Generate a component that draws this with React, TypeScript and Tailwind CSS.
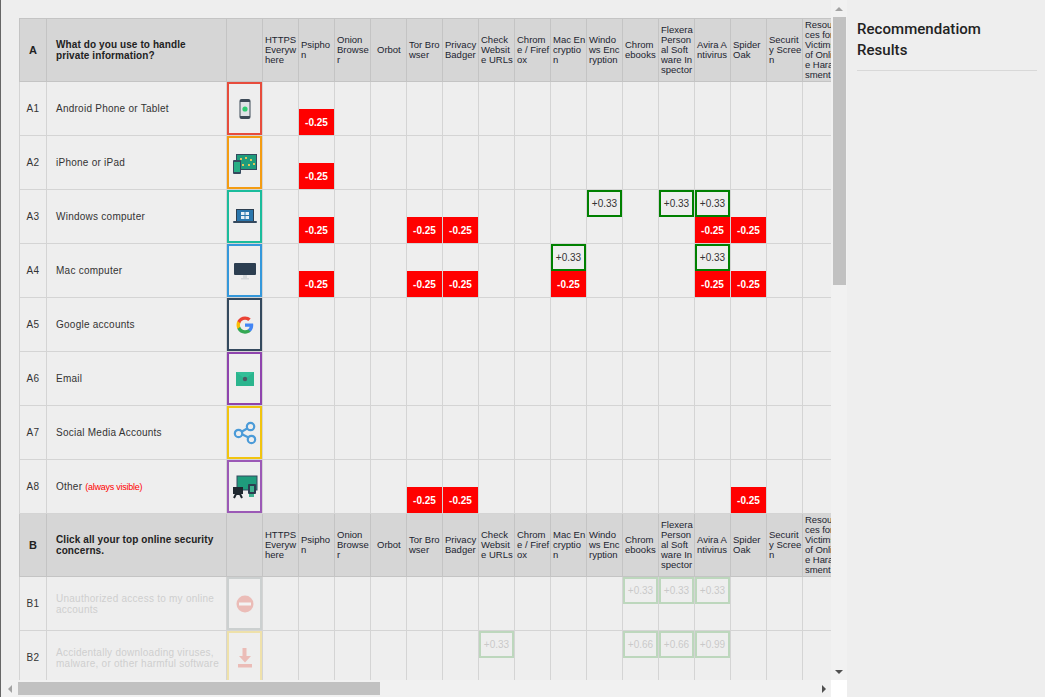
import type { ReactNode } from "react"

const TOOLS = [
  "HTTPS Everywhere",
  "Psiphon",
  "Onion Browser",
  "Orbot",
  "Tor Browser",
  "Privacy Badger",
  "Check Website URLs",
  "Chrome / Firefox",
  "Mac Encryption",
  "Windows Encryption",
  "Chromebooks",
  "Flexera Personal Software Inspector",
  "Avira Antivirus",
  "Spider Oak",
  "Security Screen",
  "Resources for Victims of Online Harassment",
]

const PhoneIcon = (
  <svg width="26" height="26" viewBox="0 0 26 26">
    <rect x="7.500" y="3" width="11" height="20" rx="2" fill="#3d4a57" />
    <rect x="8.500" y="6" width="9" height="14" fill="#dfe3e6" />
    <circle cx="13" cy="13" r="2.600" fill="#2ecc71" />
  </svg>
)

const TabletIcon = (
  <svg width="26" height="26" viewBox="0 0 26 26">
    <rect x="4" y="4" width="21" height="16" fill="#34495e" />
    <rect x="5" y="5" width="19" height="14" fill="#1f9c7c" />
    <path d="M8 8h2v2H8zM13 7h2v2h-2zM18 9h2v2h-2zM10 14h2v2h-2zM16 14h2v2h-2zM21 13h2v2h-2z" fill="#e2c65a" />
    <rect x="1" y="10" width="8" height="14" rx="1" fill="#34495e" />
    <rect x="2" y="12" width="6" height="10" fill="#27ae85" />
  </svg>
)

const LaptopIcon = (
  <svg width="26" height="26" viewBox="0 0 26 26">
    <path d="M4 5h18v12H4z" fill="#2c3e50" />
    <rect x="5" y="6" width="16" height="11" fill="#2a76ad" />
    <rect x="9" y="8" width="8" height="7" fill="#e8f0f6" />
    <path d="M13 8v7M9 11.500h8" stroke="#2a76ad" />
    <rect x="1" y="17" width="24" height="2" rx="1" fill="#34495e" />
  </svg>
)

const MonitorIcon = (
  <svg width="26" height="26" viewBox="0 0 26 26">
    <rect x="2" y="5" width="22" height="12" rx="1" fill="#2c3e50" />
    <rect x="11" y="17" width="4" height="3" fill="#d5d8da" />
    <rect x="9" y="20" width="8" height="1.500" fill="#d5d8da" />
  </svg>
)

const GoogleIcon = (
  <svg width="18" height="18" viewBox="0 0 48 48">
    <path fill="#4285f4" d="M46 24.500c0-1.600-.1-3-.4-4.500H24v8.600h12.400c-.5 2.800-2.100 5.200-4.500 6.800v5.600h7.300C43.500 36.900 46 31.200 46 24.500z" />
    <path fill="#34a853" d="M24 47c6.100 0 11.300-2 15.100-5.500l-7.300-5.600c-2 1.400-4.700 2.200-7.800 2.200-5.900 0-10.900-4-12.700-9.400H3.800v5.800C7.600 42 15.200 47 24 47z" />
    <path fill="#fbbc05" d="M11.300 28.700c-.5-1.400-.7-3-.7-4.700s.3-3.300.7-4.700v-5.800H3.800C2.300 16.500 1.400 20.100 1.400 24s.9 7.500 2.400 10.500z" />
    <path fill="#ea4335" d="M24 10c3.300 0 6.300 1.100 8.700 3.400l6.500-6.500C35.300 3.300 30.100 1 24 1 15.200 1 7.600 6 3.800 13.500l7.500 5.800C13.100 14 18.100 10 24 10z" />
  </svg>
)

const MailIcon = (
  <svg width="26" height="26" viewBox="0 0 26 26">
    <rect x="4" y="6" width="18" height="14" fill="#2bb58e" />
    <path d="M4 6l9 7 9-7" fill="#33bf98" />
    <circle cx="13" cy="13" r="2.200" fill="#4c5a63" />
  </svg>
)

const ShareIcon = (
  <svg width="24" height="24" viewBox="0 0 26 26" fill="#eee" stroke="#4b9bd8" strokeWidth="2.400">
    <path d="M7 13l12-7M7 13l12 6" />
    <circle cx="6" cy="13.500" r="4" />
    <circle cx="19" cy="6" r="4" />
    <circle cx="20" cy="20" r="4" />
  </svg>
)

const DevicesIcon = (
  <svg width="26" height="26" viewBox="0 0 26 26">
    <rect x="5" y="2" width="20" height="14" fill="#1f9c7c" stroke="#34495e" />
    <rect x="1" y="13" width="10" height="7" fill="#1e272e" />
    <path d="M4 20l-2 4M8 20l2 4M4 20h4" stroke="#1e272e" strokeWidth="2" />
    <rect x="16" y="10" width="8" height="10" rx="1" fill="#2c3e50" />
    <rect x="18" y="12" width="4" height="6" fill="#3fb28f" />
    <rect x="17" y="20" width="5" height="3" fill="#3fb28f" />
  </svg>
)

const NoEntryIcon = (
  <svg width="20" height="20" viewBox="0 0 20 20">
    <circle cx="10" cy="10" r="8.500" fill="#e74c3c" />
    <rect x="4" y="8.500" width="12" height="3" fill="#fff" />
  </svg>
)

const DownloadIcon = (
  <svg width="20" height="22" viewBox="0 0 20 22" fill="#e74c3c">
    <path d="M7.500 1h4v8h4.500l-6 6.500-6-6.500h3.500z" />
    <rect x="3" y="17" width="14" height="3.500" />
  </svg>
)

type Mark = { col: number; value: string }

type Row = {
  id: string
  label: ReactNode
  icon: ReactNode
  frame: string
  faded?: boolean
  up?: Mark[]
  down?: number[]
}

const SECTION_A: Row[] = [
  { id: "A1", label: "Android Phone or Tablet", icon: PhoneIcon, frame: "border-[#e74c3c]", down: [1] },
  { id: "A2", label: "iPhone or iPad", icon: TabletIcon, frame: "border-[#f39c12]", down: [1] },
  {
    id: "A3",
    label: "Windows computer",
    icon: LaptopIcon,
    frame: "border-[#1abc9c]",
    up: [
      { col: 9, value: "+0.33" },
      { col: 11, value: "+0.33" },
      { col: 12, value: "+0.33" },
    ],
    down: [1, 4, 5, 12, 13],
  },
  {
    id: "A4",
    label: "Mac computer",
    icon: MonitorIcon,
    frame: "border-[#3498db]",
    up: [
      { col: 8, value: "+0.33" },
      { col: 12, value: "+0.33" },
    ],
    down: [1, 4, 5, 8, 12, 13],
  },
  { id: "A5", label: "Google accounts", icon: GoogleIcon, frame: "border-[#34495e]" },
  { id: "A6", label: "Email", icon: MailIcon, frame: "border-[#8e44ad]" },
  { id: "A7", label: "Social Media Accounts", icon: ShareIcon, frame: "border-[#f1c40f]" },
  {
    id: "A8",
    label: (
      <>
        Other <span className="text-[9px] tracking-[-0.25px] text-[#ff0000]">(always visible)</span>
      </>
    ),
    icon: DevicesIcon,
    frame: "border-[#9b59b6]",
    down: [4, 5, 13],
  },
]

const SECTION_B: Row[] = [
  {
    id: "B1",
    label: "Unauthorized access to my online accounts",
    icon: NoEntryIcon,
    frame: "border-[#7f8c8d]",
    faded: true,
    up: [
      { col: 10, value: "+0.33" },
      { col: 11, value: "+0.33" },
      { col: 12, value: "+0.33" },
    ],
  },
  {
    id: "B2",
    label: "Accidentally downloading viruses, malware, or other harmful software",
    icon: DownloadIcon,
    frame: "border-[#f1c40f]",
    faded: true,
    up: [
      { col: 6, value: "+0.33" },
      { col: 10, value: "+0.66" },
      { col: 11, value: "+0.66" },
      { col: 12, value: "+0.99" },
    ],
  },
]

function SectionHeader({ letter, question }: { letter: string; question: string }) {
  return (
    <tr className="h-[63px] bg-[#d6d6d6]">
      <th className="border border-[#c4c4c4] text-center text-[11px] font-bold text-[#222]">{letter}</th>
      <th className="border border-[#c4c4c4] pr-[10px] pl-[9px] text-left text-[10px] leading-[11px] font-bold tracking-[0.1px] text-[#222]">
        {question}
      </th>
      <th className="border border-[#c4c4c4]" />
      {TOOLS.map((tool, i) => (
        <th
          key={tool}
          className={`overflow-hidden border border-[#c4c4c4] text-left align-middle text-[9.5px] leading-[10px] font-normal break-all whitespace-normal text-[#1c2430] ${
            tool === "Orbot" ? "pl-[6px]" : "pl-[2px]"
          } ${i === TOOLS.length - 1 ? "tracking-[-0.05px]" : ""}`}
        >
          {tool}
        </th>
      ))}
    </tr>
  )
}

function QuestionRow({ row }: { row: Row }) {
  const faded = row.faded
  return (
    <tr className="h-[54px]">
      <td className="border border-[#d4d4d4] text-center text-[10px] tracking-[0.4px] text-[#333]">{row.id}</td>
      <td
        className={`border border-[#d4d4d4] pl-[9px] text-[10px] leading-[11px] tracking-[0.25px] ${
          faded ? "text-[#cfcfcf]" : "text-[#333]"
        }`}
      >
        {row.label}
      </td>
      <td className="border border-[#d4d4d4] p-0">
        <div
          className={`flex h-[53px] items-center justify-center border-2 ${row.frame} ${faded ? "opacity-30" : ""}`}
        >
          {row.icon}
        </div>
      </td>
      {TOOLS.map((tool, col) => {
        const up = row.up?.find((m) => m.col === col)
        const down = row.down?.includes(col)
        return (
          <td key={tool} className="border border-[#d4d4d4] p-0 align-top">
            <div className="flex h-[53px] flex-col">
              {up && (
                <div
                  className={`flex h-[27px] items-center justify-center border-2 border-[#008000] text-[10px] ${
                    faded ? "text-[#333] opacity-20" : "text-[#333]"
                  }`}
                >
                  {up.value}
                </div>
              )}
              {down && (
                <div className="mt-auto flex h-[26px] items-center justify-center bg-[#ff0000] text-[10px] font-bold text-white">
                  -0.25
                </div>
              )}
            </div>
          </td>
        )
      })}
    </tr>
  )
}

function Arrow({ dir, dark }: { dir: "up" | "down" | "left" | "right"; dark?: boolean }) {
  const points = {
    up: "0,7 8,7 4,3",
    down: "0,3 8,3 4,7",
    left: "6,1 6,9 2,5",
    right: "3,1 3,9 7,5",
  }[dir]
  return (
    <svg width="8" height="10" viewBox="0 0 8 10">
      <polygon points={points} fill={dark ? "#505050" : "#a3a3a3"} />
    </svg>
  )
}

export default function App() {
  return (
    <div className="flex h-[697px] w-[1045px] overflow-hidden border-l border-[#666] bg-[#eeeeee] font-['Liberation_Sans',Arial,sans-serif]">
      {/* Scrolling matrix, scrollbars are drawn since the window is a fixed shot */}
      <div className="flex h-full w-[846px] flex-col">
        <div className="flex min-h-0 flex-1">
          <div className="w-[830px] overflow-hidden pt-[18px] pl-[18px]">
            <table className="w-[819px] table-fixed border-collapse">
              <colgroup>
                <col className="w-[27px]" />
                <col className="w-[180px]" />
                <col className="w-[36px]" />
                {TOOLS.map((tool) => (
                  <col key={tool} className="w-[36px]" />
                ))}
              </colgroup>
              <tbody>
                <SectionHeader letter="A" question="What do you use to handle private information?" />
                {SECTION_A.map((row) => (
                  <QuestionRow key={row.id} row={row} />
                ))}
                <SectionHeader letter="B" question="Click all your top online security concerns." />
                {SECTION_B.map((row) => (
                  <QuestionRow key={row.id} row={row} />
                ))}
              </tbody>
            </table>
          </div>
          <div className="flex w-4 flex-col items-center bg-[#f1f1f1]">
            <div className="flex h-[17px] items-center justify-center">
              <Arrow dir="up" />
            </div>
            <div className="ml-[1px] h-[268px] w-[13px] bg-[#c1c1c1]" />
            <div className="mt-auto flex h-[17px] items-center justify-center">
              <Arrow dir="down" dark />
            </div>
          </div>
        </div>
        <div className="flex h-[17px] shrink-0">
          <div className="flex w-[830px] items-center bg-[#f1f1f1]">
            <div className="flex w-[17px] justify-center">
              <Arrow dir="left" />
            </div>
            <div className="h-[13px] w-[362px] bg-[#c1c1c1]" />
            <div className="ml-auto flex w-[17px] justify-center">
              <Arrow dir="right" dark />
            </div>
          </div>
          <div className="w-4 bg-white" />
        </div>
      </div>

      {/* Results panel */}
      <aside className="w-[198px] pt-[19px] pr-2 pl-[10px]">
        <div className="border-b border-[#d8d8d8] pb-[9px]">
          <h2 className="w-[150px] font-['Roboto',sans-serif] text-[15px] leading-[21px] font-medium tracking-[0.05px] text-[#222]">
            Recommendatiom Results
          </h2>
        </div>
      </aside>
    </div>
  )
}
